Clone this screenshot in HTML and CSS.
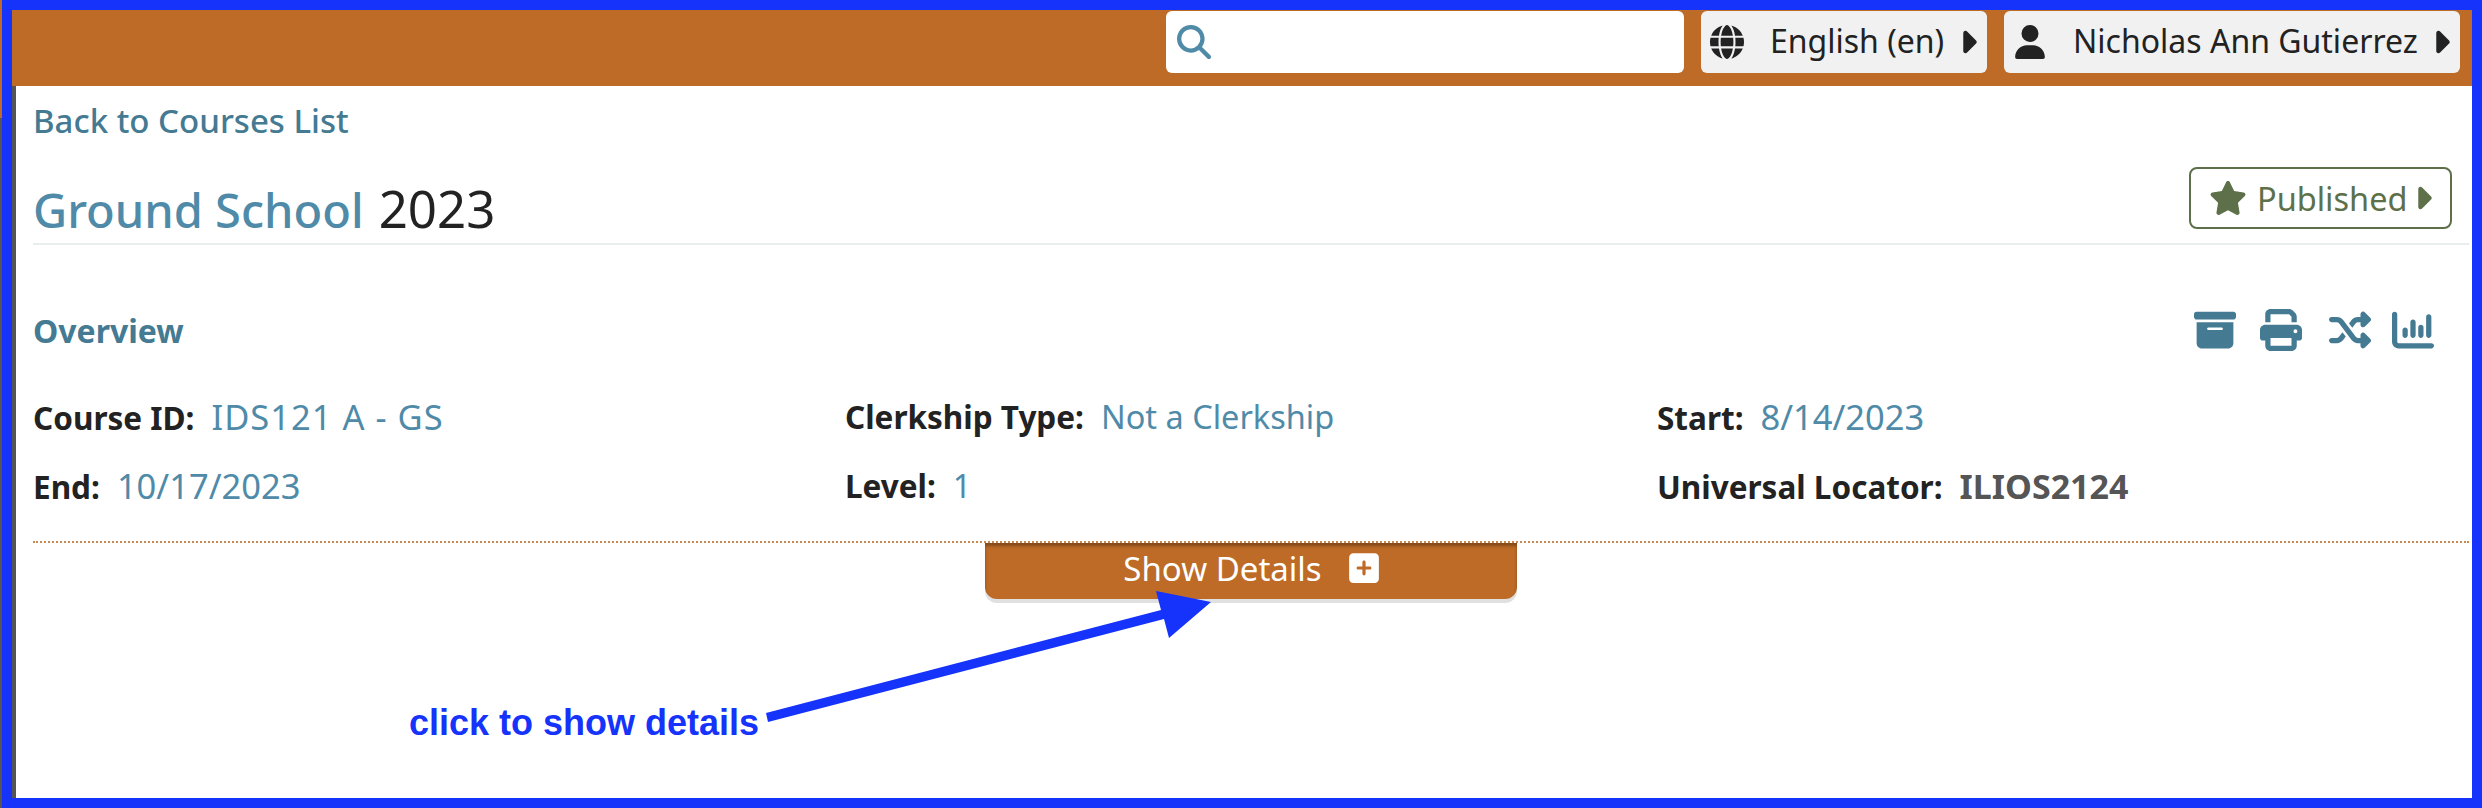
FILE: index.html
```html
<!DOCTYPE html>
<html lang="en">
<head>
  <meta charset="UTF-8">
  <title>Ground School 2023</title>
  <link rel="stylesheet" href="styles.css">
</head>
<body>
  <div class="page">
    <div class="frame">
      <header class="topbar">
        <div class="search">
          <svg class="search-icon" viewBox="0 0 512 512"><path d="M416 208c0 45.9-14.9 88.3-40 122.7L502.6 457.4c12.5 12.5 12.5 32.8 0 45.3s-32.8 12.5-45.3 0L330.7 376c-34.4 25.2-76.8 40-122.7 40C93.1 416 0 322.9 0 208S93.1 0 208 0S416 93.1 416 208zM208 352a144 144 0 1 0 0-288 144 144 0 1 0 0 288z"/></svg>
        </div>
        <div class="menu menu-lang">
          <svg class="menu-icon" viewBox="0 0 512 512"><path d="M352 256c0 22.2-1.2 43.6-3.3 64H163.3c-2.2-20.4-3.3-41.8-3.3-64s1.2-43.6 3.3-64H348.7c2.2 20.4 3.3 41.8 3.3 64zm28.8-64H503.9c5.3 20.5 8.1 41.9 8.1 64s-2.8 43.5-8.1 64H380.8c2.1-20.6 3.2-42 3.2-64s-1.1-43.4-3.2-64zm112.6-32H376.7c-10-63.9-29.8-117.4-55.3-151.6c78.3 20.7 142 77.5 171.9 151.6zm-149.1 0H167.7c6.1-36.4 15.5-68.6 27-94.7c10.5-23.6 22.2-40.7 33.5-51.5C239.4 3.2 248.7 0 256 0s16.6 3.2 27.8 13.8c11.3 10.8 23 27.9 33.5 51.5c11.6 26 20.9 58.2 27 94.7zm-209 0H18.6C48.6 85.9 112.2 29.1 190.6 8.4C165.1 42.6 145.3 96.1 135.3 160zM8.1 192H131.2c-2.1 20.6-3.2 42-3.2 64s1.1 43.4 3.2 64H8.1C2.8 299.5 0 278.1 0 256s2.8-43.5 8.1-64zM194.7 446.6c-11.6-26-20.9-58.2-27-94.6H344.3c-6.1 36.4-15.5 68.6-27 94.6c-10.5 23.6-22.2 40.7-33.5 51.5C272.6 508.8 263.3 512 256 512s-16.6-3.2-27.8-13.8c-11.3-10.8-23-27.9-33.5-51.5zM135.3 352c10 63.9 29.8 117.4 55.3 151.6C112.2 482.9 48.6 426.1 18.6 352H135.3zm358.1 0c-30 74.1-93.6 130.9-171.9 151.6c25.5-34.2 45.2-87.7 55.3-151.6H493.4z"/></svg>
          <span class="menu-text">English (en)</span>
          <svg class="caret" viewBox="60 0 200 512"><path d="M246.6 278.6c12.5-12.5 12.5-32.8 0-45.3l-128-128c-9.2-9.2-22.9-11.9-34.9-6.9s-19.8 16.6-19.8 29.6l0 256c0 12.9 7.8 24.6 19.8 29.6s25.7 2.2 34.9-6.9l128-128z"/></svg>
        </div>
        <div class="menu menu-user">
          <svg class="menu-icon" viewBox="0 0 448 512"><path d="M224 256A128 128 0 1 0 224 0a128 128 0 1 0 0 256zm-45.7 48C79.8 304 0 383.8 0 482.3C0 498.7 13.3 512 29.7 512H418.3c16.4 0 29.7-13.3 29.7-29.7C448 383.8 368.2 304 269.7 304H178.3z"/></svg>
          <span class="menu-text">Nicholas Ann Gutierrez</span>
          <svg class="caret" viewBox="60 0 200 512"><path d="M246.6 278.6c12.5-12.5 12.5-32.8 0-45.3l-128-128c-9.2-9.2-22.9-11.9-34.9-6.9s-19.8 16.6-19.8 29.6l0 256c0 12.9 7.8 24.6 19.8 29.6s25.7 2.2 34.9-6.9l128-128z"/></svg>
        </div>
      </header>

      <main class="content">
        <a class="back-link" href="#">Back to Courses List</a>

        <div class="title-row">
          <h1 class="title"><span class="title-name">Ground School</span> <span class="title-year">2023</span></h1>
          <div class="status">
            <svg class="status-star" viewBox="0 0 576 512"><path d="M316.9 18C311.6 7 300.4 0 288.1 0s-23.4 7-28.8 18L195 150.3 51.4 171.5c-12 1.8-22 10.2-25.7 21.7s-.7 24.2 7.9 32.7L137.8 329 113.2 474.7c-2 12 3 24.2 12.9 31.3s23 8 33.8 2.3l128.3-68.5 128.3 68.5c10.8 5.7 23.9 4.9 33.8-2.3s14.9-19.3 12.9-31.3L438.5 329 542.7 225.9c8.6-8.5 11.7-21.2 7.9-32.7s-13.7-19.9-25.7-21.7L381.2 150.3 316.9 18z"/></svg>
            <span>Published</span>
            <svg class="caret" viewBox="60 0 200 512"><path d="M246.6 278.6c12.5-12.5 12.5-32.8 0-45.3l-128-128c-9.2-9.2-22.9-11.9-34.9-6.9s-19.8 16.6-19.8 29.6l0 256c0 12.9 7.8 24.6 19.8 29.6s25.7 2.2 34.9-6.9l128-128z"/></svg>
          </div>
        </div>

        <div class="overview-head">
          <h2 class="overview-title">Overview</h2>
          <div class="actions">
            <svg viewBox="0 0 512 512"><path d="M32 32H480c17.7 0 32 14.3 32 32V96c0 17.7-14.3 32-32 32H32C14.3 128 0 113.7 0 96V64C0 46.3 14.3 32 32 32zm0 128H480V416c0 35.3-28.7 64-64 64H96c-35.3 0-64-28.7-64-64V160zm128 80c0 8.8 7.2 16 16 16H336c8.8 0 16-7.2 16-16s-7.2-16-16-16H176c-8.8 0-16 7.2-16 16z"/></svg>
            <svg viewBox="0 0 512 512"><path d="M128 0C92.7 0 64 28.7 64 64v96h64V64H354.7L384 93.3V160h64V93.3c0-17-6.7-33.3-18.7-45.3L400 18.7C388 6.7 371.7 0 354.7 0H128zM384 352v32 64H128V384 368 352H384zm64 32h32c17.7 0 32-14.3 32-32V256c0-35.3-28.7-64-64-64H64c-35.3 0-64 28.7-64 64v96c0 17.7 14.3 32 32 32H64v64c0 35.3 28.7 64 64 64H384c35.3 0 64-28.7 64-64V384zM432 248a24 24 0 1 1 0 48 24 24 0 1 1 0-48z"/></svg>
            <svg class="action-shuffle" viewBox="0 0 512 512"><path d="M403.8 34.4c12-5 25.7-2.2 34.9 6.9l64 64c6 6 9.4 14.1 9.4 22.6s-3.4 16.6-9.4 22.6l-64 64c-9.2 9.2-22.9 11.9-34.9 6.9s-19.8-16.6-19.8-29.6V160H352c-10.1 0-19.6 4.7-25.6 12.8L284 229.3 244 176l31.2-41.6C293.3 110.2 321.8 96 352 96h32V64c0-12.9 7.8-24.6 19.8-29.6zM164 282.7L204 336l-31.2 41.6C154.7 401.8 126.2 416 96 416H32c-17.7 0-32-14.3-32-32s14.3-32 32-32H96c10.1 0 19.6-4.7 25.6-12.8L164 282.7zm274.6 188c-9.2 9.2-22.9 11.9-34.9 6.9s-19.8-16.6-19.8-29.6V416H352c-30.2 0-58.7-14.2-76.8-38.4L121.6 172.8c-6-8.1-15.5-12.8-25.6-12.8H32c-17.7 0-32-14.3-32-32s14.3-32 32-32H96c30.2 0 58.7 14.2 76.8 38.4L326.4 339.2c6 8.1 15.5 12.8 25.6 12.8h32V320c0-12.9 7.8-24.6 19.8-29.6s25.7-2.2 34.9 6.9l64 64c6 6 9.4 14.1 9.4 22.6s-3.4 16.6-9.4 22.6l-64 64z"/></svg>
            <svg viewBox="0 0 512 512"><path d="M32 32c17.7 0 32 14.3 32 32V400c0 8.8 7.2 16 16 16H480c17.7 0 32 14.3 32 32s-14.3 32-32 32H80c-44.2 0-80-35.8-80-80V64C0 46.3 14.3 32 32 32zM160 224c17.7 0 32 14.3 32 32v64c0 17.7-14.3 32-32 32s-32-14.3-32-32V256c0-17.7 14.3-32 32-32zm128-64V320c0 17.7-14.3 32-32 32s-32-14.3-32-32V160c0-17.7 14.3-32 32-32s32 14.3 32 32zm64 32c17.7 0 32 14.3 32 32v96c0 17.7-14.3 32-32 32s-32-14.3-32-32V224c0-17.7 14.3-32 32-32zM480 96V320c0 17.7-14.3 32-32 32s-32-14.3-32-32V96c0-17.7 14.3-32 32-32s32 14.3 32 32z"/></svg>
          </div>
        </div>

        <div class="details">
          <div class="detail"><span class="label">Course ID:</span> <span class="value value-code value-id">IDS121 A - GS</span></div>
          <div class="detail"><span class="label">Clerkship Type:</span> <span class="value">Not a Clerkship</span></div>
          <div class="detail"><span class="label">Start:</span> <span class="value value-code">8/14/2023</span></div>
          <div class="detail"><span class="label">End:</span> <span class="value value-code">10/17/2023</span></div>
          <div class="detail"><span class="label">Level:</span> <span class="value">1</span></div>
          <div class="detail"><span class="label">Universal Locator:</span> <span class="value value-strong">ILIOS2124</span></div>
        </div>

        <div class="toggle-wrap">
          <button class="toggle">
            <span>Show Details</span>
            <svg class="toggle-icon" viewBox="0 0 448 512"><path d="M64 32C28.7 32 0 60.7 0 96V416c0 35.3 28.7 64 64 64H384c35.3 0 64-28.7 64-64V96c0-35.3-28.7-64-64-64H64zM200 344V280H136c-13.3 0-24-10.7-24-24s10.7-24 24-24h64V168c0-13.3 10.7-24 24-24s24 10.7 24 24v64h64c13.3 0 24 10.7 24 24s-10.7 24-24 24H248v64c0 13.3-10.7 24-24 24s-24-10.7-24-24z"/></svg>
          </button>
        </div>
      </main>
    </div>

    <!-- annotation drawn on top of the screenshot -->
    <svg class="arrow" viewBox="0 0 2482 808"><polygon points="766,713 1161,610 1156,591 1211,602 1169,638 1164,619 768,722"/></svg>
    <div class="callout">click to show details</div>
  </div>
</body>
</html>
```

FILE: styles.css
```css
* {
  box-sizing: border-box;
}

body {
  margin: 0;
  font-family: "Noto Sans", Lato, sans-serif;
  color: #222;
  background-color: #fff;
}

.page {
  position: relative;
  width: 2482px;
  height: 808px;
  padding-left: 2px;
  background: linear-gradient(#bd6b26 118px, #555 118px);
  overflow: hidden;
}

.frame {
  display: flex;
  flex-direction: column;
  height: 100%;
  border: 10px solid #1533fb;
  background-color: #fff;
}

/* top bar */
.topbar {
  display: flex;
  justify-content: flex-end;
  gap: 17px;
  height: 76px;
  padding: 1px 12px 13px 0;
  background-color: #bd6b26;
}

.search {
  display: flex;
  align-items: center;
  width: 518px;
  padding-left: 11px;
  background-color: #fff;
  border-radius: 6px;
}

.search-icon {
  width: 34px;
  height: 34px;
  fill: #4f8ba8;
}

.menu {
  display: flex;
  align-items: center;
  padding: 0 10px 0 9px;
  background-color: #f1f1f1;
  border-radius: 6px;
  font-size: 32px;
}

.menu-lang {
  width: 286px;
}

.menu-user {
  width: 456px;
}

.menu-icon {
  width: 34px;
  height: 34px;
  fill: #222;
}

.menu-text {
  margin-left: 26px;
  margin-bottom: 3px;
  white-space: nowrap;
}

.caret {
  width: 14px;
  height: 36px;
  margin-left: auto;
  fill: currentColor;
}

/* course header */
.content {
  flex: 1;
  padding: 0 3px 0 17px;
  border-left: 4px solid #555;
}

.back-link {
  display: block;
  margin-top: 15px;
  font-size: 33px;
  font-weight: 500;
  line-height: 40px;
  color: #457a93;
  text-decoration: none;
}

.title-row {
  display: flex;
  justify-content: space-between;
  align-items: flex-start;
  margin-top: 26px;
  padding: 0 17px 2px 0;
  border-bottom: 2px solid #e8eded;
}

.title {
  display: flex;
  align-items: baseline;
  gap: 15px;
  height: 60px;
  margin: 11px 0 3px;
  font-size: 47px;
  font-weight: 500;
  line-height: 60px;
}

.title-name {
  color: #4f8ba8;
}

.title-year {
  font-size: 51px;
  font-weight: 400;
}

.status {
  display: flex;
  align-items: center;
  width: 263px;
  height: 62px;
  padding: 0 18px;
  border: 2px solid #5d7049;
  border-radius: 8px;
  font-size: 32.5px;
  color: #5d7049;
}

.status-star {
  width: 38px;
  height: 34px;
  margin-right: 10px;
  fill: #5d7049;
}

/* overview */
.overview-head {
  display: flex;
  justify-content: space-between;
  align-items: center;
  margin-top: 63px;
  padding-right: 35px;
}

.overview-title {
  margin: 3px 0 0;
  font-size: 32px;
  font-weight: 700;
  line-height: 40px;
  color: #457a93;
}

.actions {
  display: flex;
  gap: 24px;
}

.actions svg {
  width: 42px;
  height: 42px;
  fill: #457a93;
}

.actions .action-shuffle {
  margin: 0 -3px 0 3px;
}

.details {
  display: grid;
  grid-template-columns: repeat(3, 812px);
  row-gap: 29px;
  margin-top: 46px;
  margin-bottom: 35px;
}

.detail {
  display: flex;
  align-items: baseline;
  gap: 17px;
  height: 40px;
  font-size: 31.5px;
  line-height: 40px;
  white-space: nowrap;
}

.label {
  font-weight: 700;
}

.value {
  font-size: 32.5px;
  color: #4f8ba8;
}

.value-code {
  font-size: 34.5px;
}

.value-id {
  letter-spacing: 1px;
}

.value-strong {
  font-size: 34px;
  font-weight: 700;
  color: #555;
}

/* show details */
.toggle-wrap {
  display: flex;
  justify-content: center;
  border-top: 2px dotted #c98a4e;
}

.toggle {
  display: flex;
  justify-content: center;
  align-items: center;
  gap: 27px;
  width: 532px;
  height: 56px;
  padding: 0 0 6px;
  border: none;
  border-radius: 0 0 12px 12px;
  background-color: #bd6b26;
  box-shadow: 0 4px 0 #e0e0e0, inset 0 3px 3px rgba(0, 0, 0, 0.3);
  font-family: inherit;
  font-size: 33px;
  color: #fff;
}

.toggle-icon {
  width: 30px;
  height: 34px;
  fill: #fff;
}

/* annotation */
.arrow {
  position: absolute;
  top: 0;
  left: 0;
  width: 2482px;
  height: 808px;
  fill: #1533fb;
}

.callout {
  position: absolute;
  left: 409px;
  top: 702px;
  font-family: "Liberation Sans", sans-serif;
  font-size: 36px;
  font-weight: 700;
  line-height: 42px;
  color: #1533fb;
  white-space: nowrap;
}
```
